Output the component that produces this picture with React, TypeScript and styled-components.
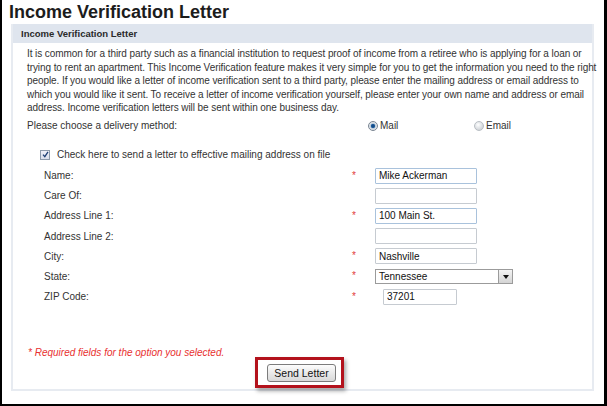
import styled, { createGlobalStyle } from 'styled-components';

const GlobalStyle = createGlobalStyle`
	html, body {
		margin: 0;
		padding: 0;
		background: #ffffff;
	}
	body {
		font-family: 'Liberation Sans', Arial, sans-serif;
		color: #333333;
	}
`;

const Frame = styled.div`
	width: 607px;
	height: 406px;
	box-sizing: border-box;
	border-left: 2px solid #000;
	border-right: 3px solid #000;
	border-bottom: 2px solid #000;
	overflow: hidden;
	display: flex;
	flex-direction: column;
`;

const PageTitle = styled.h1`
	margin: 0;
	padding-left: 7px;
	height: 24px;
	line-height: 25px;
	font-size: 18px;
	font-weight: bold;
	color: #1c1c1c;
`;

const Panel = styled.section`
	margin-left: 9px;
	width: 583px;
	box-sizing: border-box;
	border: 2px solid #e7ebf1;
	border-top: 0;
	display: flex;
	flex-direction: column;
	padding-bottom: 1px;
`;

const PanelHeader = styled.h2`
	margin: 0;
	height: 19px;
	line-height: 19px;
	padding-left: 8px;
	background: #dfe5ee;
	font-size: 9.5px;
	font-weight: bold;
	color: #2a2a2a;
`;

const Intro = styled.p`
	margin: 4px 0 0 14px;
	font-size: 10px;
	letter-spacing: -0.08px;
	line-height: 13.5px;
	white-space: nowrap;
`;

const DeliveryRow = styled.div`
	margin: 4px 0 0 14px;
	height: 14px;
	display: flex;
	align-items: center;
	font-size: 10px;
`;

const DeliveryLabel = styled.span`
	width: 341px;
`;

const RadioOption = styled.label`
	display: flex;
	align-items: center;
	gap: 2px;
	width: 106px;
	font-size: 10px;
`;

const RadioDot = styled.span<{ $checked?: boolean }>`
	width: 10px;
	height: 10px;
	box-sizing: border-box;
	border-radius: 50%;
	border: 1px solid ${(p) => (p.$checked ? '#7a8592' : '#b9bec4')};
	background: ${(p) =>
		p.$checked
			? 'radial-gradient(circle, #0e3e78 0, #1f5f9e 1.8px, #c9d3de 2.6px, #eef1f4 4.5px)'
			: 'radial-gradient(circle at 40% 35%, #ffffff 0, #eceef0 2px, #d2d6da 5px)'};
`;

const CheckRow = styled.label`
	margin: 15px 0 0 27px;
	height: 14px;
	display: flex;
	align-items: center;
	gap: 7px;
	font-size: 10px;
`;

const CheckBox = styled.span`
	width: 10px;
	height: 10px;
	box-sizing: border-box;
	border: 1px solid #8d9bab;
	background: linear-gradient(#eef0f8, #d9dfec);
	display: flex;
	align-items: center;
	justify-content: center;
`;

const AddressForm = styled.div`
	margin: 6px 0 0 31px;
	display: grid;
	grid-template-columns: 308px 23px auto;
	grid-auto-rows: 16px;
	row-gap: 4.2px;
	align-items: center;
	font-size: 10px;
`;

const FieldLabel = styled.span`
	color: #333;
`;

const Required = styled.span`
	color: #e23b3b;
	font-size: 10px;
	line-height: 10px;
`;

const TextBox = styled.input<{ $tint?: boolean; $width?: number; $indent?: number }>`
	width: ${(p) => p.$width ?? 102}px;
	height: 16px;
	box-sizing: border-box;
	margin: 0 0 0 ${(p) => p.$indent ?? 0}px;
	padding: 0 3px;
	border: 1px solid ${(p) => (p.$tint ? '#a9c2dc' : '#c6cbd1')};
	border-radius: 1px;
	font-family: 'Liberation Sans', Arial, sans-serif;
	font-size: 10px;
	color: #111;
	background: #fff;
	outline: none;
`;

const SelectBox = styled.div`
	width: 138px;
	height: 15px;
	box-sizing: border-box;
	border: 1px solid #9b9b9b;
	display: flex;
	align-items: stretch;
	background: #fff;
`;

const SelectValue = styled.span`
	flex: 1;
	padding-left: 3px;
	line-height: 13px;
	font-size: 10px;
	color: #111;
`;

const SelectArrow = styled.span`
	width: 13px;
	border-left: 1px solid #9b9b9b;
	background: linear-gradient(#f4f4f4, #d4d4d4);
	display: flex;
	align-items: center;
	justify-content: center;

	&::after {
		content: '';
		border-left: 3.5px solid transparent;
		border-right: 3.5px solid transparent;
		border-top: 4px solid #111;
		margin-top: 2px;
	}
`;

const Note = styled.p`
	margin: 42px 0 0 15px;
	line-height: 11px;
	font-size: 10px;
	font-style: italic;
	color: #e8302f;
`;

const ButtonRow = styled.div`
	margin-top: -1px;
	display: flex;
	justify-content: center;
	padding-right: 6px;
`;

const Highlight = styled.div`
	border: 3px solid #b3121c;
	padding: 4px 5px 3px 9px;
	box-shadow: 2px 3px 4px rgba(0, 0, 0, 0.35);
	background: #fff;
`;

const SendButton = styled.button`
	width: 69px;
	height: 18px;
	padding: 0;
	border: 1px solid #7c7c7c;
	border-radius: 3px;
	background: linear-gradient(#fdfdfd, #e6e6e6 60%, #d9d9d9);
	font-family: 'Liberation Sans', Arial, sans-serif;
	font-size: 10.5px;
	color: #111;
	display: block;
`;

const introLines = [
	'It is common for a third party such as a financial institution to request proof of income from a retiree who is applying for a loan or',
	'trying to rent an apartment. This Income Verification feature makes it very simple for you to get the information you need to the right',
	'people. If you would like a letter of income verification sent to a third party, please enter the mailing address or email address to',
	'which you would like it sent. To receive a letter of income verification yourself, please enter your own name and address or email',
	'address. Income verification letters will be sent within one business day.',
];

export default function App() {
	return (
		<>
			<GlobalStyle />
			<Frame>
				<PageTitle>Income Verification Letter</PageTitle>
				<Panel>
					<PanelHeader>Income Verification Letter</PanelHeader>
					<Intro>
						{introLines.map((line, i) => (
							<span key={i}>
								{line}
								{i < introLines.length - 1 && <br />}
							</span>
						))}
					</Intro>

					<DeliveryRow>
						<DeliveryLabel>Please choose a delivery method:</DeliveryLabel>
						<RadioOption>
							<RadioDot $checked />
							Mail
						</RadioOption>
						<RadioOption>
							<RadioDot />
							Email
						</RadioOption>
					</DeliveryRow>

					<CheckRow>
						<CheckBox>
							<svg width='7' height='7' viewBox='0 0 7 7'>
								<path d='M1 3.6 L2.8 5.6 L6 0.8' fill='none' stroke='#1d3f73' strokeWidth='1.3' />
							</svg>
						</CheckBox>
						Check here to send a letter to effective mailing address on file
					</CheckRow>

					<AddressForm>
						<FieldLabel>Name:</FieldLabel>
						<Required>*</Required>
						<TextBox $tint defaultValue='Mike Ackerman' />

						<FieldLabel>Care Of:</FieldLabel>
						<span />
						<TextBox />

						<FieldLabel>Address Line 1:</FieldLabel>
						<Required>*</Required>
						<TextBox $tint defaultValue='100 Main St.' />

						<FieldLabel>Address Line 2:</FieldLabel>
						<span />
						<TextBox />

						<FieldLabel>City:</FieldLabel>
						<Required>*</Required>
						<TextBox defaultValue='Nashville' />

						<FieldLabel>State:</FieldLabel>
						<Required>*</Required>
						<SelectBox>
							<SelectValue>Tennessee</SelectValue>
							<SelectArrow />
						</SelectBox>

						<FieldLabel>ZIP Code:</FieldLabel>
						<Required>*</Required>
						<TextBox $width={74} $indent={8} defaultValue='37201' />
					</AddressForm>

					<Note>* Required fields for the option you selected.</Note>

					<ButtonRow>
						<Highlight>
							<SendButton type='button'>Send Letter</SendButton>
						</Highlight>
					</ButtonRow>
				</Panel>
			</Frame>
		</>
	);
}
